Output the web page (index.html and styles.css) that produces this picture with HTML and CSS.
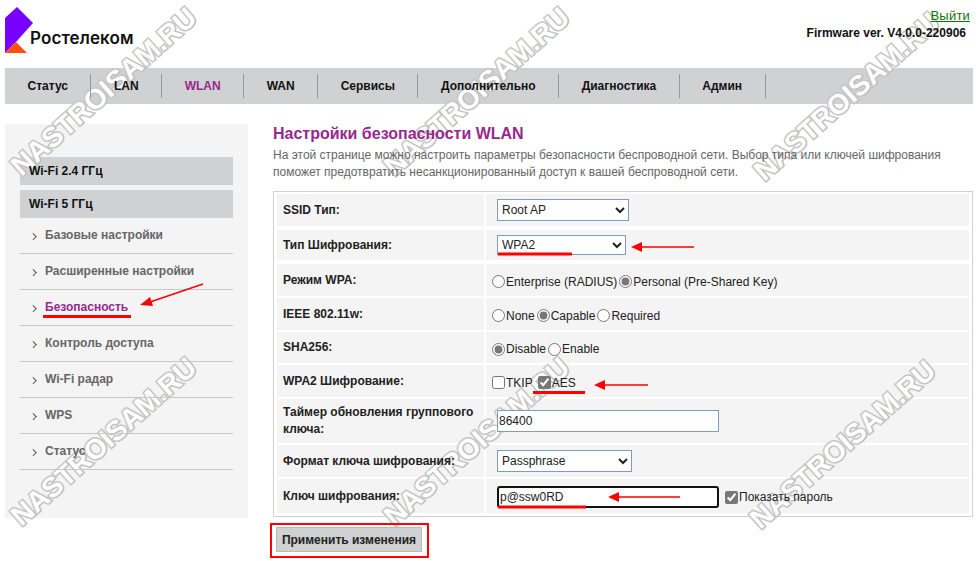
FILE: index.html
```html
<!DOCTYPE html>
<html lang="ru">
<head>
<meta charset="utf-8">
<title>Ростелеком</title>
<link rel="stylesheet" href="styles.css">
</head>
<body>
<div class="page">
  <header class="header">
    <div class="logo top">
      <svg class="logo-mark" width="28" height="46" viewBox="0 0 28 46">
        <polygon points="0,11 12,0 28,16 11,35 0,46" fill="#7700ff"/>
        <polygon points="0,46 11,35 22,46" fill="#ff4f12"/>
      </svg>
      <span class="logo-text">Ростелеком</span>
    </div>
    <div class="account top">
      <a class="logout" href="#">Выйти</a>
      <div class="firmware">Firmware ver. V4.0.0-220906</div>
    </div>
  </header>

  <nav class="nav">
    <a class="nav-item top" href="#">Статус</a>
    <a class="nav-item top" href="#">LAN</a>
    <a class="nav-item nav-active top" href="#">WLAN</a>
    <a class="nav-item top" href="#">WAN</a>
    <a class="nav-item top" href="#">Сервисы</a>
    <a class="nav-item top" href="#">Дополнительно</a>
    <a class="nav-item top" href="#">Диагностика</a>
    <a class="nav-item top" href="#">Админ</a>
  </nav>

  <div class="main">
    <aside class="sidebar">
      <div class="side-head"><span class="top">Wi-Fi 2.4 ГГц</span></div>
      <div class="side-head"><span class="top">Wi-Fi 5 ГГц</span></div>
      <ul class="side-list">
        <li class="side-item top">Базовые настройки</li>
        <li class="side-item top">Расширенные настройки</li>
        <li class="side-item side-active top">Безопасность</li>
        <li class="side-item top">Контроль доступа</li>
        <li class="side-item top">Wi-Fi радар</li>
        <li class="side-item top">WPS</li>
        <li class="side-item top">Статус</li>
      </ul>
    </aside>

    <section class="content">
      <h1 class="title top">Настройки безопасности WLAN</h1>
      <p class="desc top">На этой странице можно настроить параметры безопасности беспроводной сети. Выбор типа или ключей шифрования поможет предотвратить несанкционированный доступ к вашей беспроводной сети.</p>

      <div class="form">
        <div class="label"><span class="top">SSID Тип:</span></div>
        <div class="value"><select class="select select-ssid top"><option>Root AP</option></select></div>

        <div class="label inset"><span class="top">Тип Шифрования:</span></div>
        <div class="value inset"><select class="select select-enc top"><option>WPA2</option></select></div>

        <div class="label"><span class="top">Режим WPA:</span></div>
        <div class="value choices">
          <label class="choice top"><input type="radio" name="mode">Enterprise (RADIUS)</label>
          <label class="choice top"><input type="radio" name="mode" checked>Personal (Pre-Shared Key)</label>
        </div>

        <div class="label"><span class="top">IEEE 802.11w:</span></div>
        <div class="value choices">
          <label class="choice top"><input type="radio" name="pmf">None</label>
          <label class="choice top"><input type="radio" name="pmf" checked>Capable</label>
          <label class="choice top"><input type="radio" name="pmf">Required</label>
        </div>

        <div class="label"><span class="top">SHA256:</span></div>
        <div class="value choices">
          <label class="choice top"><input type="radio" name="sha" checked>Disable</label>
          <label class="choice top"><input type="radio" name="sha">Enable</label>
        </div>

        <div class="label"><span class="top">WPA2 Шифрование:</span></div>
        <div class="value choices checks">
          <label class="choice top"><input type="checkbox">TKIP</label>
          <label class="choice top"><input type="checkbox" checked>AES</label>
        </div>

        <div class="label"><span class="top">Таймер обновления группового ключа:</span></div>
        <div class="value"><input class="text-input top" type="text" value="86400"></div>

        <div class="label"><span class="top">Формат ключа шифрования:</span></div>
        <div class="value"><select class="select select-format top"><option>Passphrase</option></select></div>

        <div class="label"><span class="top">Ключ шифрования:</span></div>
        <div class="value key-row">
          <input class="text-input text-focus top" type="text" value="p@ssw0RD">
          <label class="choice top"><input type="checkbox" checked>Показать пароль</label>
        </div>
      </div>

      <button class="apply top" type="button">Применить изменения</button>
    </section>
  </div>

  <svg class="marks" width="978" height="561" viewBox="0 0 978 561">
    <g fill="none" stroke="#f00">
      <rect x="271" y="524" width="157" height="33" stroke-width="2"/>
      <path d="M43 316.500H131M498 254H572M533 392.500H585M498 507H586" stroke-width="3"/>
      <path d="M203 284L150 302M694 247H640M648 385H603M680 497H618" stroke-width="1.600"/>
    </g>
    <g fill="#f00">
      <polygon points="140,305 150,297 153,306"/>
      <polygon points="631,247 642,242 642,252"/>
      <polygon points="594,385 605,380 605,390"/>
      <polygon points="608,497 619,492 619,502"/>
    </g>
  </svg>

  <span class="wm wm-1">NASTROISAM.RU</span>
  <span class="wm wm-2">NASTROISAM.RU</span>
  <span class="wm wm-3">NASTROISAM.RU</span>
  <span class="wm wm-4">NASTROISAM.RU</span>
  <span class="wm wm-5">NASTROISAM.RU</span>
  <span class="wm wm-6">NASTROISAM.RU</span>
</div>
</body>
</html>
```

FILE: styles.css
```css
* { box-sizing: border-box; }
html, body { margin: 0; padding: 0; background: #fff; }
body { font-family: "Liberation Sans", Arial, sans-serif; font-size: 12px; color: #222; overflow: hidden; }

.page { position: relative; width: 978px; height: 561px; overflow: hidden; }
.top { position: relative; z-index: 2; }

.header { height: 68px; display: flex; justify-content: space-between; padding: 7px 5px 0; }
.logo { display: flex; align-items: flex-start; }
.logo-mark { display: block; }
.logo-text { margin: 20px 0 0 -3px; font-family: Inter, sans-serif; font-weight: 600; font-size: 17px; line-height: 22px; color: #111; letter-spacing: 0.1px; }
.account { text-align: right; padding: 2px 3px 0 0; }
.logout { display: inline-block; font-size: 13px; line-height: 14px; letter-spacing: 0.2px; color: #14720a; }
.firmware { margin-top: 3px; padding-right: 4px; font-size: 12px; line-height: 14px; font-weight: 700; color: #111; }

.nav { width: 968px; height: 36px; margin-left: 5px; padding-top: 6px; display: flex; background: #d0d1d3; }
.nav-item { height: 24px; padding: 0 22.500px; border-right: 1px solid #999; font-size: 12px; line-height: 24px; font-weight: 700; color: #111; text-decoration: none; }
.nav-active { color: #97288f; }

.main { display: flex; margin: 20px 0 0 5px; }

.sidebar { width: 243px; height: 394px; padding: 33px 15px 0; background: #f4f4f4; }
.side-head { height: 28px; padding-left: 9px; background: #d0d1d3; font-size: 12px; line-height: 28px; font-weight: 700; color: #111; }
.side-head + .side-head { margin-top: 5px; }
.side-list { margin: 0; padding: 0; list-style: none; }
.side-item { height: 36px; padding: 0 0 0 25px; border-bottom: 1px solid #c8c8c8; font-size: 12px; line-height: 34px; font-weight: 700; color: #666; }
.side-item::before { content: ""; position: absolute; left: 11px; top: 16px; width: 3.500px; height: 3.500px; border-top: 1.500px solid #555; border-right: 1.500px solid #555; transform: rotate(45deg); }
.side-active { color: #97288f; }

.content { margin-left: 25px; width: 700px; }
.title { margin: 0; font-size: 16px; line-height: 20px; font-weight: 700; color: #97288f; }
.desc { margin: 3px 0 0; font-size: 12px; line-height: 17px; color: #666; }

.form { margin-top: 10px; padding: 2px 3px 3px; width: 700px; border: 1px solid #d0d0d0; display: grid; grid-template-columns: 207px 483px; grid-template-rows: 32px 34px 32px 32px 31px 32px 44px 32px 34px; gap: 2px; }
.label { display: flex; align-items: center; padding: 0 6px; background: #f4f4f4; font-size: 12px; line-height: 17px; font-weight: 700; color: #222; }
.value { display: flex; align-items: center; padding-left: 11px; background: #f4f4f4; }
.inset { margin: 2px 0; }
.choices { padding: 3px 0 0 6px; gap: 3px; }
.checks { gap: 6px; }
.choice { display: inline-flex; align-items: center; font-size: 12px; color: #222; }
.choice input { width: 13px; height: 13px; margin: 0 1px 0 0; accent-color: #777; }
.choices .choice + .choice { margin-left: -1px; }

.select { height: 22px; padding: 0; background: #fff; border: 1px solid #7f9db9; border-radius: 0; font-family: inherit; font-size: 12px; color: #222; }
.select-ssid { width: 132px; }
.select-enc { width: 129px; height: 20px; }
.select-format { width: 135px; }

.text-input { width: 222px; height: 22px; padding: 0 1px; background: #fff; border: 1px solid #7f9db9; border-radius: 0; font-family: inherit; font-size: 12px; color: #222; outline: none; }
.text-focus { border: 2px solid #111; border-radius: 3px; }
.key-row { padding-top: 2px; gap: 6px; }

.apply { display: block; width: 146px; height: 25px; margin: 10px 0 0 3px; padding: 0; background: #d0d1d3; border: 1px solid #bbb; font-family: inherit; font-size: 12px; font-weight: 700; color: #222; }

.marks { position: absolute; left: 0; top: 0; z-index: 3; pointer-events: none; }

.wm { position: absolute; z-index: 1; width: 250px; text-align: center; font-size: 28px; line-height: 30px; font-weight: 700; color: #fff; -webkit-text-stroke: 3px #c6c6c6; paint-order: stroke fill; text-shadow: 1px 1px 1px #bbb; transform: rotate(-41.500deg); white-space: nowrap; pointer-events: none; }
.wm-1 { left: -21px; top: 77px; }
.wm-2 { left: 352px; top: 77px; }
.wm-3 { left: 722px; top: 82px; }
.wm-4 { left: -21px; top: 427px; }
.wm-5 { left: 352px; top: 427px; }
.wm-6 { left: 718px; top: 430px; }
```
